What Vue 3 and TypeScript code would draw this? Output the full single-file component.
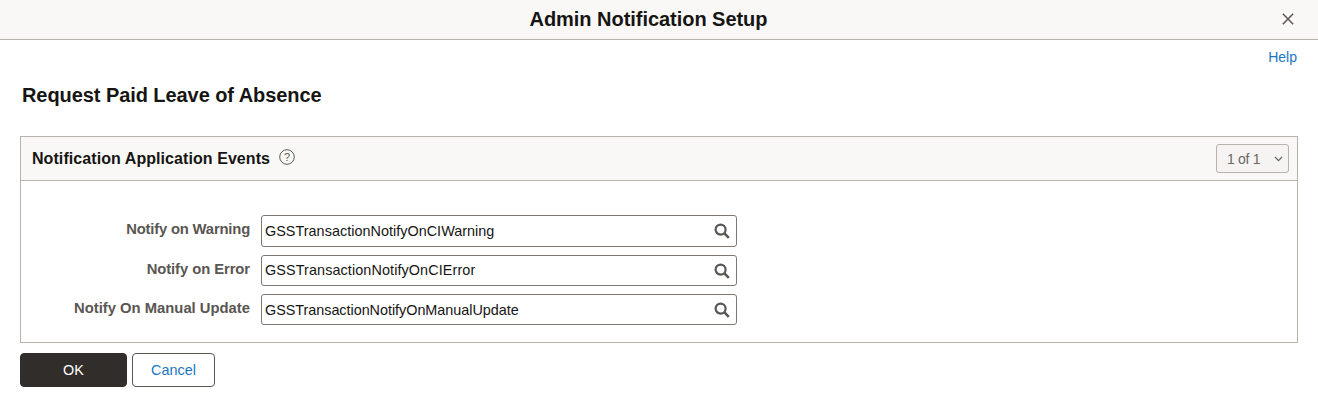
<script setup lang="ts">
const rows = [
  { label: 'Notify on Warning', value: 'GSSTransactionNotifyOnCIWarning', cls: 'r1' },
  { label: 'Notify on Error', value: 'GSSTransactionNotifyOnCIError', cls: 'r2' },
  { label: 'Notify On Manual Update', value: 'GSSTransactionNotifyOnManualUpdate', cls: 'r3' },
]
</script>

<template>
  <div class="page">
    <header class="bar">
      <h1 class="bar-title">Admin Notification Setup</h1>
      <button class="close" aria-label="Close">
        <svg width="12" height="12" viewBox="0 0 12 12"><path d="M.8.8l10.4 10.4M11.2.8L.8 11.2" stroke="#5a5652" stroke-width="1.5" fill="none" /></svg>
      </button>
    </header>
    <div class="help-row"><a class="link">Help</a></div>
    <h2 class="title">Request Paid Leave of Absence</h2>
    <section class="panel">
      <div class="panel-head">
        <span class="panel-title">Notification Application Events</span>
        <svg class="qmark" width="16" height="16" viewBox="0 0 16 16">
          <circle cx="8" cy="8" r="7.3" fill="none" stroke="#5f5b57" stroke-width="1" />
          <text x="8" y="11.6" text-anchor="middle" class="qtext">?</text>
        </svg>
        <div class="pager">
          <span class="pager-text">1 of 1</span>
          <svg width="9" height="6" viewBox="0 0 9 6"><path d="M1 1l3.5 3.6L8 1" fill="none" stroke="#6b6763" stroke-width="1.3" /></svg>
        </div>
      </div>
      <div class="panel-body">
        <div v-for="r in rows" :key="r.label" class="row" :class="r.cls">
          <label class="label">{{ r.label }}</label>
          <div class="field">
            <span class="val">{{ r.value }}</span>
            <svg width="16" height="16" viewBox="0 0 16 16"><circle cx="6.6" cy="6.6" r="5" fill="none" stroke="#5a5652" stroke-width="2.2" /><path d="M10.2 10.2l4.6 4.6" stroke="#5a5652" stroke-width="2.6" /></svg>
          </div>
        </div>
      </div>
    </section>
    <div class="actions">
      <button class="btn primary">OK</button>
      <button class="btn secondary">Cancel</button>
    </div>
  </div>
</template>

<style>
html, body { margin: 0; background: #fff; }
</style>

<style scoped>
.page { width: 1318px; height: 406px; font-family: "Liberation Sans", Arial, sans-serif; color: #161513; box-sizing: border-box; overflow: hidden; }
.bar { height: 40px; box-sizing: border-box; background: #f9f8f6; border-bottom: 1px solid #b8b3ad; display: flex; align-items: center; justify-content: center; padding-right: 21px; position: relative; }
.bar-title { margin: 0; font-size: 20px; line-height: 39px; font-weight: 700; letter-spacing: -0.04px; }
.close { position: absolute; right: 24px; top: 13px; width: 12px; height: 12px; padding: 0; border: 0; background: none; display: block; line-height: 0; }
.help-row { display: flex; justify-content: flex-end; padding: 9px 21px 0 0; height: 17px; }
.link { color: #1b76c4; font-size: 14px; line-height: 17px; }
.title { margin: 0; padding: 0 0 0 22px; margin-top: 18px; font-size: 20px; line-height: 23px; letter-spacing: -0.07px; font-weight: 700; }
.panel { margin: 29px 20px 0; height: 207px; box-sizing: border-box; border: 1px solid #b8b3ad; }
.panel-head { height: 44px; box-sizing: border-box; background: #f9f8f6; border-bottom: 1px solid #b8b3ad; display: flex; align-items: center; padding: 0 8px 0 11px; }
.panel-title { font-size: 16px; font-weight: 700; line-height: 44px; letter-spacing: 0.07px; padding-top: 1px; }
.qmark { margin-left: 9px; margin-top: -3px; }
.qtext { font-size: 11px; fill: #5f5b57; font-family: "Liberation Sans", Arial, sans-serif; }
.pager { margin-left: auto; width: 73px; height: 29px; box-sizing: border-box; border: 1px solid #b8b3ad; border-radius: 3px; display: flex; align-items: center; justify-content: space-between; padding: 0 5px 0 10px; font-size: 14px; color: #6b6763; background: #f5f4f2; }
.pager-text { letter-spacing: -0.3px; }
.panel-body { padding-top: 34px; display: flex; flex-direction: column; gap: 8px; }
.row { display: flex; align-items: flex-start; }
.label { width: 229px; text-align: right; font-size: 14.8px; font-weight: 700; color: #5a5652; line-height: 16px; padding-top: 6px; }
.r1 .label { letter-spacing: -0.18px; }
.r2 .label { letter-spacing: -0.07px; }
.field { margin-left: 11px; width: 476px; height: 32px; box-sizing: border-box; border: 1px solid #7d7873; border-radius: 3px; display: flex; align-items: center; justify-content: space-between; padding: 0 6px 0 3px; background: #fff; }
.r2 .field, .r3 .field { height: 31px; }
.val { font-size: 14.4px; color: #161513; }
.r1 .val { letter-spacing: 0.03px; }
.r2 .val { letter-spacing: 0.1px; margin-top: -1px; }
.r3 .val { letter-spacing: -0.03px; }
.actions { display: flex; gap: 5px; margin: 10px 0 0 20px; }
.btn { height: 34px; box-sizing: border-box; border-radius: 4px; font-family: inherit; font-size: 14.4px; padding: 0; }
.primary { width: 107px; background: #312d2a; color: #fff; border: 1px solid #312d2a; }
.secondary { width: 83px; background: #fff; color: #1b76c4; border: 1px solid #5a5652; }
</style>
